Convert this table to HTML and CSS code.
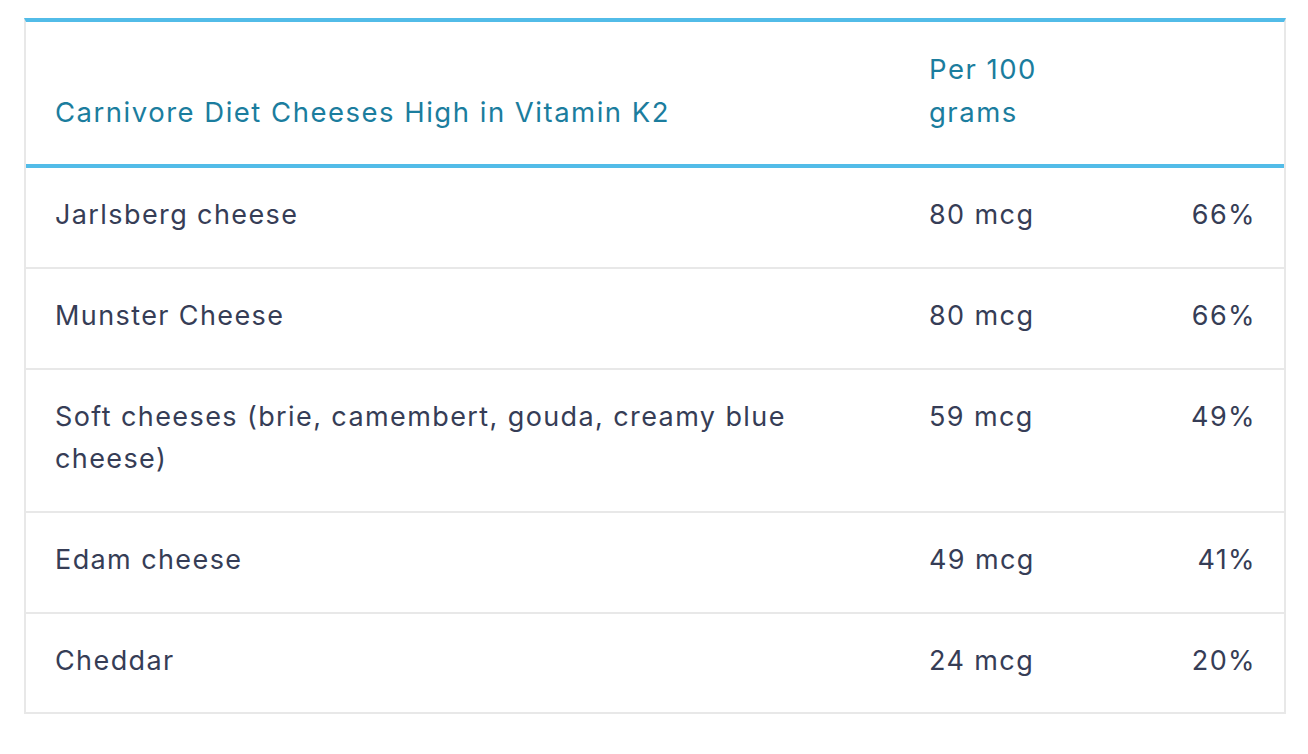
FILE: index.html
```html
<!DOCTYPE html>
<html lang="en">
<head>
<meta charset="utf-8">
<title>Carnivore Diet Cheeses High in Vitamin K2</title>
<link rel="stylesheet" href="styles.css">
</head>
<body>
<div class="wrap">
  <table class="k2">
    <colgroup>
      <col class="c-name">
      <col class="c-amt">
      <col class="c-pct">
    </colgroup>
    <thead>
      <tr>
        <th class="name">Carnivore Diet Cheeses High in Vitamin K2</th>
        <th class="amt">Per 100 grams</th>
        <th class="pct"></th>
      </tr>
    </thead>
    <tbody>
      <tr><td class="name">Jarlsberg cheese</td><td class="amt">80 mcg</td><td class="pct">66%</td></tr>
      <tr><td class="name">Munster Cheese</td><td class="amt">80 mcg</td><td class="pct">66%</td></tr>
      <tr><td class="name">Soft cheeses (brie, camembert, gouda, creamy blue cheese)</td><td class="amt">59 mcg</td><td class="pct">49%</td></tr>
      <tr><td class="name">Edam cheese</td><td class="amt">49 mcg</td><td class="pct">41%</td></tr>
      <tr><td class="name">Cheddar</td><td class="amt">24 mcg</td><td class="pct">20%</td></tr>
    </tbody>
  </table>
</div>
</body>
</html>
```

FILE: styles.css
```css
html, body {
  margin: 0;
  padding: 0;
  background: #ffffff;
}

body {
  font-family: Inter, "Open Sans", "Liberation Sans", sans-serif;
  font-size: 27px;
  line-height: 42.4px;
  letter-spacing: 1.4px;
  color: #363d56;
}

.wrap {
  padding: 18px 22px 0 24px;
}

.k2 {
  width: 1262px;
  table-layout: fixed;
  border-collapse: separate;
  border-spacing: 0;
  border-top: 4px solid #52bce8;
  border-left: 2px solid #e8e8e8;
  border-right: 2px solid #e8e8e8;
}

.c-name { width: 873px; }
.c-amt { width: 210px; }
.c-pct { width: 175px; }

.k2 th {
  font-weight: 400;
  font-size: 27.5px;
  letter-spacing: 1.5px;
  color: #1b7d9e;
  text-align: left;
  vertical-align: bottom;
  padding: 26.4px 30px 30.8px;
  border-bottom: 4px solid #52bce8;
}

.k2 td {
  vertical-align: top;
  padding: 26.2px 30px 30.2px;
  border-bottom: 2px solid #e8e8e8;
}

.k2 .name { padding-left: 29px; padding-right: 30px; }
.k2 .amt { padding-left: 30px; padding-right: 10px; }
.k2 .pct { text-align: right; padding-right: 28px; padding-left: 10px; }
```
